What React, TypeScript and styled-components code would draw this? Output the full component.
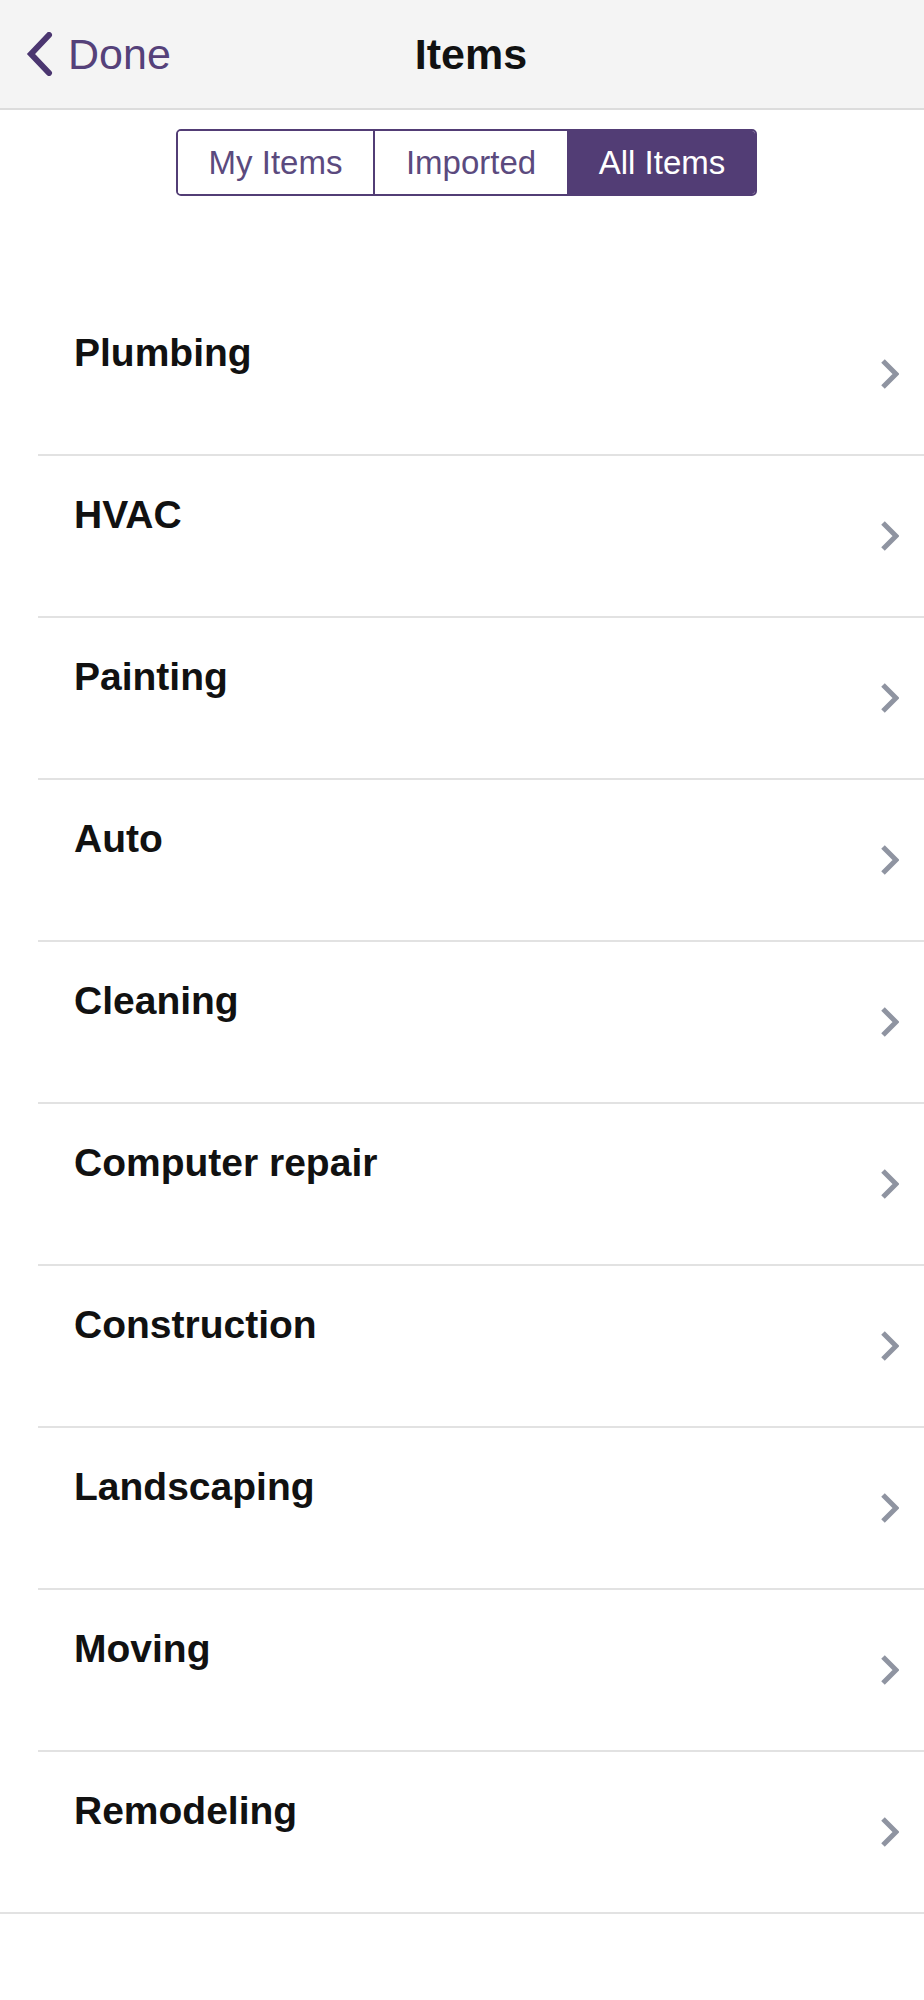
import React, { useState } from "react";
import styled, { createGlobalStyle } from "styled-components";

const GlobalStyle = createGlobalStyle`
  html, body {
    margin: 0;
    padding: 0;
    background: #ffffff;
    font-family: "Liberation Sans", Arial, Helvetica, sans-serif;
  }
  * { box-sizing: border-box; }
`;

const Page = styled.div`
  width: 924px;
  min-height: 2000px;
  background: #ffffff;
`;

const Header = styled.header`
  height: 110px;
  background: #f4f4f4;
  border-bottom: 2px solid #dcdcdc;
  display: grid;
  grid-template-columns: 1fr auto 1fr;
  align-items: center;
`;

const BackButton = styled.button`
  display: flex;
  align-items: center;
  gap: 15px;
  padding: 0 0 0 25px;
  border: none;
  background: transparent;
  cursor: pointer;
  font-family: inherit;
  font-size: 43px;
  color: #55417a;
  justify-self: start;
`;

const Title = styled.h1`
  margin: 0 0 0 18px;
  font-size: 43px;
  font-weight: 700;
  color: #111111;
`;

const SegmentWrap = styled.div`
  display: flex;
  justify-content: center;
  padding: 19px 0 0 9px;
`;

const Segmented = styled.div`
  display: grid;
  grid-template-columns: 195px 194px 188px;
  width: 581px;
  height: 67px;
  border: 2px solid #523d75;
  border-radius: 5px;
  overflow: hidden;
`;

const Segment = styled.button<{ $active: boolean }>`
  display: flex;
  align-items: center;
  justify-content: center;
  border: none;
  border-left: 2px solid #523d75;
  padding: 0;
  font-family: inherit;
  font-size: 33px;
  cursor: pointer;
  background: ${(p) => (p.$active ? "#523d75" : "#ffffff")};
  color: ${(p) => (p.$active ? "#ffffff" : "#5b4a7e")};
  &:first-child {
    border-left: none;
  }
`;

const List = styled.ul`
  list-style: none;
  margin: 98px 0 0 0;
  padding: 0;
  border-bottom: 2px solid #e2e2e2;
`;

const Row = styled.li`
  margin-left: 38px;
  height: 162px;
  padding: 36px 25px 0 36px;
  display: flex;
  justify-content: space-between;
  align-items: flex-start;
  &:not(:last-child) {
    border-bottom: 2px solid #e2e2e2;
  }
  &:last-child {
    height: 160px;
  }
`;

const RowLabel = styled.span`
  font-size: 39px;
  line-height: 45px;
  font-weight: 700;
  color: #111111;
`;

const ChevronRight = styled.svg`
  align-self: center;
  margin-top: -36px;
  width: 19px;
  height: 32px;
`;

const BackChevron = () => (
  <svg width="28" height="44" viewBox="0 0 28 44" aria-hidden="true">
    <polyline
      points="24,3 6,22 24,41"
      fill="none"
      stroke="#4b3670"
      strokeWidth="6"
      strokeLinecap="round"
      strokeLinejoin="miter"
    />
  </svg>
);

const categories = [
  "Plumbing",
  "HVAC",
  "Painting",
  "Auto",
  "Cleaning",
  "Computer repair",
  "Construction",
  "Landscaping",
  "Moving",
  "Remodeling",
];

const tabs = ["My Items", "Imported", "All Items"];

export default function App() {
  const [active, setActive] = useState("All Items");
  return (
    <Page>
      <GlobalStyle />
      <Header>
        <BackButton>
          <BackChevron />
          Done
        </BackButton>
        <Title>Items</Title>
        <span />
      </Header>
      <SegmentWrap>
        <Segmented>
          {tabs.map((t) => (
            <Segment key={t} $active={t === active} onClick={() => setActive(t)}>
              {t}
            </Segment>
          ))}
        </Segmented>
      </SegmentWrap>
      <List>
        {categories.map((c) => (
          <Row key={c}>
            <RowLabel>{c}</RowLabel>
            <ChevronRight viewBox="0 0 19 32" aria-hidden="true">
              <polyline
                points="3,3 16,16 3,29"
                fill="none"
                stroke="#8f94a1"
                strokeWidth="5"
                strokeLinejoin="miter"
              />
            </ChevronRight>
          </Row>
        ))}
      </List>
    </Page>
  );
}
